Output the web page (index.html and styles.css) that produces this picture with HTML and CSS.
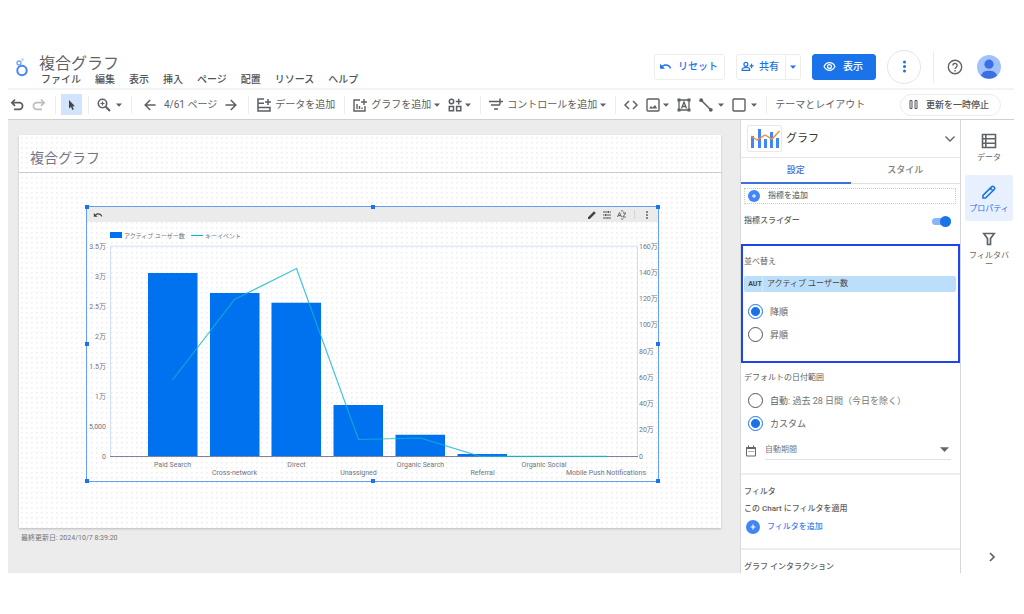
FILE: index.html
```html
<!DOCTYPE html>
<html lang="ja">
<head>
<meta charset="utf-8">
<meta name="viewport" content="width=device-width, initial-scale=1">
<title>複合グラフ</title>
<link rel="stylesheet" href="styles.css">
</head>
<body>
<svg class="defs" aria-hidden="true">
  <symbol id="caret" viewBox="0 0 6 6"><path d="M0 1.5h6L3 4.7z" fill="currentColor"/></symbol>
  <symbol id="undo-solid" viewBox="0 0 24 24"><path d="M12.5 8c-2.65 0-5.05.99-6.9 2.6L2 7v9h9l-3.62-3.62c1.39-1.16 3.16-1.88 5.12-1.88 3.54 0 6.55 2.31 7.6 5.5l2.37-.78C21.08 11.03 17.15 8 12.5 8z" fill="currentColor"/></symbol>
  <symbol id="undo" viewBox="0 0 14 14"><path d="M5 1.5 1.8 4.7 5 7.9M2 4.7h7.3a3.3 3.3 0 0 1 0 6.6H4" fill="none" stroke="currentColor" stroke-width="1.7"/></symbol>
  <symbol id="arrow" viewBox="0 0 12 12"><path d="M6.2 1 1.2 6l5 5M1.2 6h10.4" fill="none" stroke="currentColor" stroke-width="1.5"/></symbol>
  <symbol id="plus" viewBox="0 0 14 14"><circle cx="7" cy="7" r="7" fill="#4285f4"/><path d="M7 4.6v4.8M4.6 7h4.8" stroke="#fff" stroke-width="1.2"/></symbol>
</svg>
<div class="app">
  <header class="header">
    <svg class="logo" viewBox="0 0 14 20" fill="none"><circle cx="8" cy="13.5" r="4.7" stroke="#4285f4" stroke-width="2"/><circle cx="5" cy="6" r="2" stroke="#6ea3f8" stroke-width="1.3"/><circle cx="8.5" cy="2.6" r="1.5" fill="#c6dafc"/></svg>
    <div class="heading">
      <h1>複合グラフ</h1>
      <nav class="menu"><button>ファイル</button><button>編集</button><button>表示</button><button>挿入</button><button>ページ</button><button>配置</button><button>リソース</button><button>ヘルプ</button></nav>
    </div>
    <div class="actions">
      <button class="btn"><svg class="i13"><use href="#undo-solid"/></svg>リセット</button>
      <div class="split">
        <button class="btn share"><svg class="i13" viewBox="0 0 24 24" fill="none" stroke="currentColor" stroke-width="2.2"><circle cx="9" cy="8" r="3.6"/><path d="M2 19v-1.500c0-2.500 4-3.800 7-3.800s7 1.300 7 3.800V19zM19.500 7v8M15.800 11h7.400"/></svg>共有</button>
        <button class="btn drop" aria-label="共有オプション"><svg class="i6"><use href="#caret"/></svg></button>
      </div>
      <button class="btn primary"><svg class="i13" viewBox="0 0 24 24" fill="none" stroke="currentColor" stroke-width="2.200"><path d="M2 12c2-4.500 5.700-7 10-7s8 2.500 10 7c-2 4.500-5.700 7-10 7s-8-2.500-10-7z"/><circle cx="12" cy="12" r="3.600"/></svg>表示</button>
      <button class="more" aria-label="その他"><svg class="i13" viewBox="0 0 13 13" fill="#1a73e8"><circle cx="6.500" cy="2" r="1.500"/><circle cx="6.500" cy="6.500" r="1.500"/><circle cx="6.500" cy="11" r="1.500"/></svg></button>
      <span class="rule"></span>
      <button class="plain help" aria-label="ヘルプ"><svg class="i16" viewBox="0 0 16 16" fill="none" stroke="#5f6368" stroke-width="1.400"><circle cx="8" cy="8" r="6.700"/><path d="M5.900 6.500a2.100 2.100 0 1 1 3.300 1.700C8.300 8.900 8 9.200 8 10"/><path d="M8 11v1.500"/></svg></button>
      <button class="plain" aria-label="アカウント"><svg class="avatar" viewBox="0 0 24 24"><circle cx="12" cy="12" r="12" fill="#a0c2ff"/><circle cx="12" cy="9.200" r="4.600" fill="#3c6fe0"/><path d="M4 20.700c1-3.700 4-5 8-5s7 1.300 8 5a12 12 0 0 1-16 0z" fill="#3c6fe0"/></svg></button>
    </div>
  </header>

  <div class="toolbar">
    <div class="group first">
      <button aria-label="元に戻す"><svg class="i14"><use href="#undo"/></svg></button>
      <button class="off flip" aria-label="やり直し"><svg class="i14"><use href="#undo"/></svg></button>
    </div>
    <div class="group tight"><button class="selected" aria-label="選択"><svg class="i12" viewBox="0 0 12 12"><path d="M3 1v8.500l2-1.700 1.300 3.200 1.500-.7-1.300-3.100H9z" fill="#444"/></svg></button></div>
    <div class="group"><button aria-label="ズーム"><svg class="i14" viewBox="0 0 14 14" fill="none" stroke="currentColor"><circle cx="5.500" cy="5.500" r="4.200" stroke-width="1.600"/><path d="m8.700 8.700 4.300 4.300" stroke-width="2"/><path d="M5.500 3.500v4M3.500 5.500h4" stroke-width="1.200"/></svg><svg class="i6 far"><use href="#caret"/></svg></button></div>
    <div class="group wide">
      <button aria-label="前のページ"><svg class="i12"><use href="#arrow"/></svg></button><span>4/61 ページ</span><button class="flip" aria-label="次のページ"><svg class="i12"><use href="#arrow"/></svg></button>
    </div>
    <div class="group"><button><svg class="i14" viewBox="0 0 14 14" fill="none" stroke="currentColor" stroke-width="1.500"><path d="M7 1H1v12h12V9.500H1M1 5.200h6M11 1v6M8 4h6"/></svg>データを追加</button></div>
    <div class="group">
      <button><svg class="i14" viewBox="0 0 14 14" fill="none" stroke="currentColor" stroke-width="1.400"><path d="M7 2H1v11h11V8M4 6v5M6.500 8v3M9 9.500V11M11 1v6M8 4h6"/></svg>グラフを追加<svg class="i6"><use href="#caret"/></svg></button>
      <button aria-label="コミュニティ"><svg class="i14" viewBox="0 0 14 14" fill="none" stroke="currentColor" stroke-width="1.500"><circle cx="3.500" cy="3.500" r="2.200"/><path d="M1.300 8.600h4.200v4.200H1.300zM8.600 8.600h4.200v4.200H8.600zM10.700.7v5.800M7.800 3.600h5.800"/></svg><svg class="i6"><use href="#caret"/></svg></button>
    </div>
    <div class="group"><button><svg class="i14" viewBox="0 0 14 14" fill="none" stroke="currentColor" stroke-width="1.500"><path d="M0 3.500h8M2 7h9M5 11h4M11 .5v6M8 3.500h6"/></svg>コントロールを追加<svg class="i6"><use href="#caret"/></svg></button></div>
    <div class="group">
      <button aria-label="埋め込み"><svg class="i14" viewBox="0 0 14 14" fill="none" stroke="currentColor" stroke-width="1.500"><path d="M5 3 1 7l4 4M9 3l4 4-4 4"/></svg></button>
      <button aria-label="画像"><svg class="i14" viewBox="0 0 14 14" fill="none" stroke="currentColor" stroke-width="1.400"><rect x="1" y="1" width="12" height="12" rx="1"/><path d="m3 10.500 2-2.500 1.500 1.500L9 7l2.200 3.500z" fill="currentColor" stroke="none"/></svg><svg class="i6"><use href="#caret"/></svg></button>
      <button aria-label="テキスト"><svg class="i14" viewBox="0 0 14 14" fill="none" stroke="currentColor" stroke-width="1.300"><path d="M2 2h10v10H2zM4.500 10.500 7 4l2.500 6.500M5.300 8.500h3.400"/><path d="M.5.500h3v3h-3zM10.500.500h3v3h-3zM.5 10.500h3v3h-3zM10.500 10.500h3v3h-3z" fill="currentColor" stroke="none"/></svg></button>
      <button aria-label="線"><svg class="i14" viewBox="0 0 14 14"><path d="m2 2 10 10" stroke="currentColor" stroke-width="1.500"/><circle cx="2.200" cy="2.200" r="1.900" fill="currentColor"/><circle cx="11.800" cy="11.800" r="1.900" fill="currentColor"/></svg><svg class="i6 far"><use href="#caret"/></svg></button>
      <button aria-label="図形"><svg class="i14" viewBox="0 0 14 14"><rect x="1" y="1" width="12" height="12" rx="1" fill="none" stroke="currentColor" stroke-width="1.400"/></svg><svg class="i6 far"><use href="#caret"/></svg></button>
    </div>
    <div class="group"><button>テーマとレイアウト</button></div>
    <button class="pause"><svg class="i9" viewBox="0 0 9 9" fill="none" stroke="currentColor"><path d="M1 .5h2v8H1zM6 .5h2v8H6z"/></svg>更新を一時停止</button>
  </div>

  <main class="workspace">
    <section class="canvas">
      <article class="page">
        <h2>複合グラフ</h2>
        <div class="widget">
          <div class="widget-bar">
            <svg class="i10"><use href="#undo-solid"/></svg>
            <svg class="i10 push" viewBox="0 0 10 10"><path d="M1 7.200 7 1.200l1.800 1.800-6 6H1z" fill="#444"/></svg>
            <svg class="i10" viewBox="0 0 10 10" fill="none" stroke="#555"><path d="M1 2h5M7.500 2H9M1 5h1.500M4 5h5M1 8h3M5.500 8H9M6.500 1v2M3.500 4v2M5 7v2"/></svg>
            <svg class="i10" viewBox="0 0 10 10" fill="none" stroke="#555" stroke-width=".9"><path d="M.5 7 2.500 2.500 4.500 7M1.200 5.600h2.600M5.800 3h3L5.800 7h3M4 1.500 5.200.500l1.200 1M4 8.500l1.200 1 1.200-1"/></svg>
            <i></i>
            <svg class="i10" viewBox="0 0 10 10" fill="#555"><circle cx="5" cy="2" r=".9"/><circle cx="5" cy="5" r=".9"/><circle cx="5" cy="8" r=".9"/></svg>
          </div>
          <svg class="chart" viewBox="87 222 571 259" role="img" aria-label="アクティブ ユーザー数とキーイベント">
            <rect x="110" y="232" width="12" height="6" fill="#0072f0"/><text x="124" y="238" class="leg">アクティブ ユーザー数</text>
            <path d="M191 235.500h12" stroke="#00b6cb"/><text x="205" y="238" class="leg">キーイベント</text>
            <path d="M110.500 456V246.200h527V456" fill="none" stroke="#cfdffb"/>
            <path d="M110 456.500h528" stroke="#7c8497"/>
            <g fill="#0072f0"><path d="M148 273h49.500v183H148zM210 293h49.500v163H210zM271.500 302.700H321V456h-49.500zM333.500 405H383v51h-49.500zM395.500 434.700H445V456h-49.500zM457.500 454H507v2.300h-49.500z"/></g>
            <path d="M172.500 380 234.500 299.500 296.500 268.500 358.500 439.500 420.500 438 480 456.300H607" fill="none" stroke="#12b5cb" stroke-opacity=".8" stroke-width="1.200"/>
            <g class="end"><text x="106" y="248.500">3.5万</text><text x="106" y="278.500">3万</text><text x="106" y="308.500">2.5万</text><text x="106" y="338.500">2万</text><text x="106" y="368.500">1.5万</text><text x="106" y="398.500">1万</text><text x="106" y="428.500">5,000</text><text x="106" y="458.500">0</text></g>
            <g><text x="639" y="248.500">160万</text><text x="639" y="274.500">140万</text><text x="639" y="301">120万</text><text x="639" y="327">100万</text><text x="639" y="353.500">80万</text><text x="639" y="379.500">60万</text><text x="639" y="406">40万</text><text x="639" y="432">20万</text><text x="639" y="458.500">0</text></g>
            <g class="mid"><text x="172.500" y="466.500">Paid Search</text><text x="234.500" y="475">Cross-network</text><text x="296.500" y="466.500">Direct</text><text x="358.500" y="475">Unassigned</text><text x="420.500" y="466.500">Organic Search</text><text x="482.500" y="475">Referral</text><text x="544" y="466.500">Organic Social</text><text x="606" y="475">Mobile Push Notifications</text></g>
          </svg>
          <span class="handle tl"></span><span class="handle tc"></span><span class="handle tr"></span><span class="handle ml"></span><span class="handle mr"></span><span class="handle bl"></span><span class="handle bc"></span><span class="handle br"></span>
        </div>
      </article>
      <p class="updated">最終更新日: 2024/10/7 8:39:20</p>
    </section>

    <aside class="panel">
      <div class="panel-head">
        <span class="thumb"><svg viewBox="0 0 30 20"><path d="M1 7h3v12H1zM8 0h3v19H8zM14 10h3v9h-3zM20 3h3v16h-3zM26 9h3v10h-3z" fill="#4285f4"/><path d="m1 7 6 4 8-5 7 4 7.500-8" fill="none" stroke="#f98b3c" stroke-width="1.400"/></svg></span>
        <h3>グラフ</h3>
        <button class="plain" aria-label="折りたたむ"><svg class="i12" viewBox="0 0 12 12"><path d="m1.500 3.500 4.500 4.500 4.500-4.500" fill="none" stroke="#5f6368" stroke-width="1.300"/></svg></button>
      </div>
      <div class="tabs"><button class="active">設定</button><button>スタイル</button></div>
      <div class="metrics">
        <button class="add-metric"><svg class="i12"><use href="#plus"/></svg>指標を追加</button>
        <label class="switch">指標スライダー<input type="checkbox" checked></label>
      </div>
      <fieldset class="sort">
        <div class="label">並べ替え</div>
        <button class="field"><b>AUT</b><span>アクティブ ユーザー数</span></button>
        <label class="radio"><input type="radio" name="order" checked>降順</label>
        <label class="radio"><input type="radio" name="order">昇順</label>
      </fieldset>
      <fieldset class="range">
        <div class="label">デフォルトの日付範囲</div>
        <label class="radio"><input type="radio" name="range"><span>自動<small>: 過去 28 日間（今日を除く）</small></span></label>
        <label class="radio"><input type="radio" name="range" checked>カスタム</label>
        <div class="period">
          <svg class="i12" viewBox="0 0 12 12" fill="none" stroke="#666"><path d="M1.500 2.500h9v8.500h-9z"/><path d="M1.500 3h9" stroke-width="2"/><path d="M3.500.500v2M8.500.500v2"/><path d="M3.500 6.500h5" stroke-dasharray="1 1"/></svg>
          <div class="select"><select aria-label="期間"><option>自動期間</option></select><svg class="i8" viewBox="0 0 6 6"><use href="#caret"/></svg></div>
        </div>
      </fieldset>
      <section class="filter">
        <div class="label">フィルタ</div>
        <div class="label">この Chart にフィルタを適用</div>
        <button class="add-filter"><svg class="i14"><use href="#plus"/></svg>フィルタを追加</button>
      </section>
      <section class="interaction"><div class="label">グラフ インタラクション</div></section>
    </aside>

    <nav class="rail">
      <button><svg class="i16" viewBox="0 0 16 16" fill="none" stroke="currentColor" stroke-width="1.600"><path d="M1.500 1.500h13v13h-13zM1.500 5.800h13M1.500 10.200h13M4.800 1.500v13"/></svg>データ</button>
      <button class="current"><svg class="i16" viewBox="0 0 16 16" fill="none" stroke="currentColor" stroke-width="1.600"><path d="M2 14v-2.600L10.800 2.600a1.200 1.200 0 0 1 1.700 0l.9.900a1.200 1.200 0 0 1 0 1.700L4.600 14zM9.300 4.200l2.600 2.600"/></svg>プロパティ</button>
      <button class="bar"><svg class="i16" viewBox="0 0 16 16" fill="none" stroke="currentColor" stroke-width="1.700"><path d="M2.800 2.500h10.400L9.500 7.600v5.900h-3V7.600z"/></svg>フィルタバー</button>
      <button class="collapse" aria-label="閉じる"><svg class="i12" viewBox="0 0 12 12"><path d="m4 2 4 4-4 4" fill="none" stroke="currentColor" stroke-width="1.700"/></svg></button>
    </nav>
  </main>
</div>
</body>
</html>
```
FILE: styles.css
```css
* { box-sizing: border-box; }
body { margin: 0; background: #fff; color: #5f6368; font-family: Roboto, "Noto Sans CJK JP", sans-serif; font-size: 10px; line-height: 12px; }
h1, h2, h3, p, fieldset { margin: 0; padding: 0; border: 0; font-weight: 400; min-width: 0; }
button { display: flex; align-items: center; margin: 0; padding: 0; border: 0; background: none; color: inherit; font: inherit; white-space: nowrap; }
svg { flex: none; display: block; }
.defs { position: absolute; width: 0; height: 0; }
.i6 { width: 6px; height: 6px; }
.i8 { width: 9px; height: 9px; }
.i9 { width: 9px; height: 9px; }
.i10 { width: 10px; height: 10px; }
.i12 { width: 12px; height: 12px; }
.i13 { width: 13px; height: 13px; }
.i14 { width: 14px; height: 14px; }
.i16 { width: 16px; height: 16px; }

.app { display: flex; flex-direction: column; min-height: 100vh; padding: 45px 10px 43px 8px; }

.header { display: flex; align-items: center; height: 45px; padding: 0 13px 0 6px; border-bottom: 2px solid #f3f3f3; }
.logo { width: 14px; height: 20px; }
.heading { margin-left: 11px; padding-top: 8px; }
.heading h1 { font-size: 16px; line-height: 18px; }
.menu { display: flex; gap: 14px; padding: 1px 2px; color: #505357; font-weight: 500; }
.actions { display: flex; align-items: center; margin-left: auto; }
.btn { gap: 6px; height: 26px; padding: 0 6px 0 4px; border: 1px solid #ededed; border-radius: 3px; color: #1a73e8; font-weight: 500; }
.split { display: flex; margin: 0 11px; }
.share { gap: 5px; border-radius: 3px 0 0 3px; padding: 0 6px 0 4px; }
.drop { border-left: 0; border-radius: 0 3px 3px 0; padding: 0 4px; }
.primary { gap: 7px; padding: 0 12px 0 10px; border-color: #1a73e8; background: #1a73e8; color: #fff; }
.more { justify-content: center; width: 34px; height: 34px; margin: 0 12px 0 11px; border: 1px solid #e6e6e6; border-radius: 50%; }
.rule { width: 1px; height: 32px; background: #ececec; }
.help { margin: 0 14px 0 13px; }
.avatar { width: 24px; height: 24px; }

.toolbar { display: flex; align-items: center; height: 30px; border-bottom: 1px solid #cfcfcf; color: #5c5f63; white-space: nowrap; }
.group { display: flex; align-items: center; gap: 8px; height: 18px; padding: 0 9px 0 8px; border-left: 1px solid #ececec; }
.group button { gap: 4px; }
.group button .i6 { margin-left: -1px; }
.group button .far { margin-left: 1px; }
.group.first { padding: 0 9px 0 2px; border-left: 0; }
.group.tight { padding: 0 6px 0 5px; }
.group.wide { padding: 0 11px 0 12px; }
.off { opacity: .4; }
.flip { transform: scaleX(-1); }
.selected { justify-content: center; width: 21px; height: 21px; background: #d2e3fc; }
.pause { gap: 8px; height: 22px; margin-left: auto; margin-right: 13px; padding: 0 11px 0 8px; border: 1px solid #ececec; border-radius: 11px; font-size: 9px; font-weight: 500; color: #505357; }

.workspace { display: flex; flex: 1; height: 451px; overflow: hidden; }
.canvas { flex: 1; min-width: 0; padding: 15px 19px 0 11px; background: #ececec; }
.page { height: 393px; background: #fff radial-gradient(circle, #f1f1f1 1px, transparent 1px) 0 0 / 5px 5px; box-shadow: 0 1px 2px #bbb; }
.page h2 { padding: 13px 11px 12px; height: 38px; border-bottom: 1px solid #ccc; color: #757588; font-size: 14px; line-height: 20px; }
.widget { position: relative; margin: 33px 62px 0 67px; border: 1px solid #669df6; }
.widget-bar { display: flex; align-items: center; gap: 5px; height: 15px; padding: 0 6px; background: #ebebeb; color: #444; }
.widget-bar i { width: 1px; height: 9px; margin: 0 2px; background: #d5d5d5; }
.push { margin-left: auto; }
.chart { width: 100%; height: auto; }
.chart text { fill: #70757f; font-size: 7px; }
.chart .leg { font-size: 6px; }
.end { text-anchor: end; }
.mid { text-anchor: middle; }
.handle { position: absolute; width: 4px; height: 4px; background: #1a73e8; transform: translate(-50%, -50%); }
.tl, .tc, .tr { top: 0; }
.ml, .mr { top: 50%; }
.bl, .bc, .br { top: 100%; }
.tl, .ml, .bl { left: 0; }
.tc, .bc { left: 50%; }
.tr, .mr, .br { left: 100%; }
.updated { padding: 4px 2px; color: #757575; font-size: 7px; }

.panel { flex: none; width: 221px; border: solid #d5d7d9; border-width: 0 1px; color: #606060; font-size: 8px; font-weight: 500; }
.panel-head { display: flex; align-items: center; gap: 4px; height: 38px; padding: 0 4px 0 6px; border-bottom: 1px solid #e6e6e6; }
.thumb { display: flex; align-items: center; justify-content: center; width: 35px; height: 27px; border: 1px solid #e8e8e8; border-radius: 2px; }
.thumb svg { width: 30px; height: 20px; }
.panel-head h3 { flex: 1; color: #333; font-size: 11px; }
.tabs { display: flex; height: 26px; border-bottom: 1px solid #e0e0e0; font-size: 9px; color: #808080; }
.tabs button { flex: 1; justify-content: center; height: 26px; border-bottom: 2px solid transparent; }
.tabs .active { border-color: #3f70d8; color: #3f70d8; }
.metrics { height: 60px; padding: 4px 4px 0 3px; }
.add-metric { width: 100%; height: 16px; gap: 8px; padding: 0 3px; border: 1px dotted #ccc; color: #707070; }
.switch { display: flex; align-items: center; justify-content: space-between; height: 34px; padding-right: 5px; }
.switch input { appearance: none; display: flex; align-items: center; justify-content: flex-end; width: 19px; height: 7px; margin: 0; border-radius: 4px; background: #8ab4f8; }
.switch input::before { content: ""; width: 11px; height: 11px; border-radius: 50%; background: #1a73e8; }
.label { padding-left: 3px; }
.sort { height: 119px; padding: 10px 2px 0 0; border: 2px solid #1f44ee; }
.sort .label { padding-left: 1px; }
.field { width: calc(100% - 1px); height: 16px; margin: 8px 0 8px 1px; border-radius: 2px; background: #bbdefb; color: #444; }
.field b { width: 19px; padding-left: 4px; border-right: 1px solid #d3eafc; font-size: 7px; line-height: 16px; }
.field span { padding-left: 4px; }
.radio { display: flex; align-items: center; gap: 7px; height: 23px; padding-left: 7px; font-size: 9px; }
.sort .radio { padding-left: 5px; }
.radio input { appearance: none; width: 15px; height: 15px; margin: 0; border: 1px solid #555; outline: 0; border-radius: 50%; }
.radio input:checked { border-color: #1a73e8; background: radial-gradient(circle, #1a73e8 4px, transparent 5px); }
.radio small { color: #757575; font-size: 9px; font-weight: 400; }
.range { height: 112px; padding-top: 9px; border-bottom: 2px solid #eee; }
.range .label { margin-bottom: 5px; }
.period { display: flex; align-items: center; gap: 8px; padding: 6px 9px 0 4px; }
.select { position: relative; display: flex; flex: 1; border-bottom: 1px solid #e3e3e3; }
.select select { appearance: none; width: 100%; height: 18px; margin: 0; padding: 0; border: 0; background: none; color: #777; font: inherit; }
.select svg { position: absolute; top: 4px; right: 2px; color: #666; }
.filter { height: 75px; padding-top: 11px; border-bottom: 2px solid #eee; }
.filter .label { margin-bottom: 5px; }
.add-filter { gap: 7px; padding-left: 5px; color: #4a80ee; }
.interaction { padding-top: 11px; }

.rail { display: flex; flex-direction: column; flex: none; align-items: center; width: 53px; padding: 7px 0 10px 3px; color: #5f6368; font-size: 8px; line-height: 9px; }
.rail button { flex-direction: column; gap: 4px; width: 48px; height: 48px; padding: 6px 4px 0; white-space: normal; }
.rail .current { border-radius: 3px; background: #e8f0fe; color: #1a73e8; height: 46px; padding: 9px 2px 0; }
.rail .bar { padding-top: 10px; }
.rail .collapse { width: 12px; height: 12px; margin-top: auto; margin-left: 6px; padding: 0; }
```
